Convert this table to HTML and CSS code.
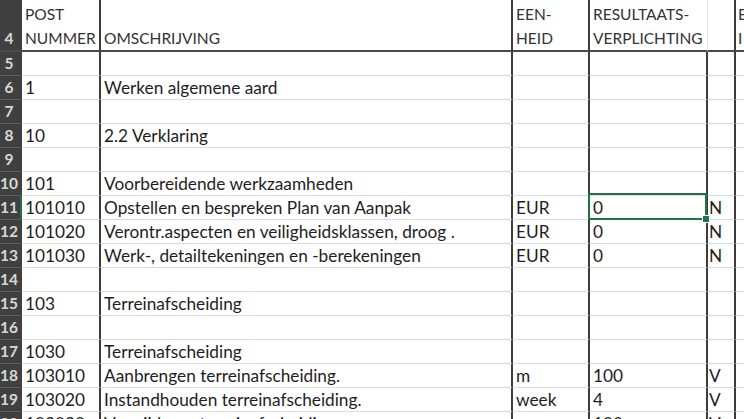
FILE: index.html
```html
<!DOCTYPE html>
<html lang="nl">
<head>
<meta charset="utf-8">
<title>Bestek</title>
<link rel="stylesheet" href="styles.css">
</head>
<body>
<table class="sheet">
  <colgroup>
    <col class="c-rh"><col class="c-a"><col class="c-b"><col class="c-c"><col class="c-d"><col class="c-e"><col class="c-f">
  </colgroup>
  <tr class="hdr">
    <th class="rh">4</th>
    <td class="a">POST<br>NUMMER</td>
    <td class="b">OMSCHRIJVING</td>
    <td class="c">EEN-<br>HEID</td>
    <td class="d">RESULTAATS-<br>VERPLICHTING</td>
    <td class="e"></td>
    <td class="f">E<br>I</td>
  </tr>
  <tr><th class="rh">5</th><td class="a"></td><td class="b"></td><td class="c"></td><td class="d"></td><td class="e"></td><td class="f"></td></tr>
  <tr><th class="rh">6</th><td class="a">1</td><td class="b">Werken algemene aard</td><td class="c"></td><td class="d"></td><td class="e"></td><td class="f"></td></tr>
  <tr><th class="rh">7</th><td class="a"></td><td class="b"></td><td class="c"></td><td class="d"></td><td class="e"></td><td class="f"></td></tr>
  <tr><th class="rh">8</th><td class="a">10</td><td class="b">2.2 Verklaring</td><td class="c"></td><td class="d"></td><td class="e"></td><td class="f"></td></tr>
  <tr><th class="rh">9</th><td class="a"></td><td class="b"></td><td class="c"></td><td class="d"></td><td class="e"></td><td class="f"></td></tr>
  <tr><th class="rh">10</th><td class="a">101</td><td class="b">Voorbereidende werkzaamheden</td><td class="c"></td><td class="d"></td><td class="e"></td><td class="f"></td></tr>
  <tr><th class="rh rh-active">11</th><td class="a">101010</td><td class="b">Opstellen en bespreken Plan van Aanpak</td><td class="c">EUR</td><td class="d selected">0</td><td class="e">N</td><td class="f"></td></tr>
  <tr><th class="rh">12</th><td class="a">101020</td><td class="b">Verontr.aspecten en veiligheidsklassen, droog .</td><td class="c">EUR</td><td class="d">0</td><td class="e">N</td><td class="f"></td></tr>
  <tr><th class="rh">13</th><td class="a">101030</td><td class="b">Werk-, detailtekeningen en -berekeningen</td><td class="c">EUR</td><td class="d">0</td><td class="e">N</td><td class="f"></td></tr>
  <tr><th class="rh">14</th><td class="a"></td><td class="b"></td><td class="c"></td><td class="d"></td><td class="e"></td><td class="f"></td></tr>
  <tr><th class="rh">15</th><td class="a">103</td><td class="b">Terreinafscheiding</td><td class="c"></td><td class="d"></td><td class="e"></td><td class="f"></td></tr>
  <tr><th class="rh">16</th><td class="a"></td><td class="b"></td><td class="c"></td><td class="d"></td><td class="e"></td><td class="f"></td></tr>
  <tr><th class="rh">17</th><td class="a">1030</td><td class="b">Terreinafscheiding</td><td class="c"></td><td class="d"></td><td class="e"></td><td class="f"></td></tr>
  <tr><th class="rh">18</th><td class="a">103010</td><td class="b">Aanbrengen terreinafscheiding.</td><td class="c">m</td><td class="d">100</td><td class="e">V</td><td class="f"></td></tr>
  <tr><th class="rh">19</th><td class="a">103020</td><td class="b">Instandhouden terreinafscheiding.</td><td class="c">week</td><td class="d">4</td><td class="e">V</td><td class="f"></td></tr>
  <tr><th class="rh">20</th><td class="a">103030</td><td class="b">Verwijderen terreinafscheiding.</td><td class="c">m</td><td class="d">100</td><td class="e">V</td><td class="f"></td></tr>
</table>
</body>
</html>
```
FILE: styles.css
```css
html, body {
  margin: 0;
  padding: 0;
  background: #ffffff;
  overflow: hidden;
  width: 744px;
  height: 419px;
}

.sheet {
  table-layout: fixed;
  border-collapse: separate;
  border-spacing: 0;
  width: 744px;
  font-family: "Lato", "Liberation Sans", sans-serif;
  font-size: 17.25px;
  color: #1e1e1e;
}

.c-rh { width: 22px; }
.c-a { width: 79px; }
.c-b { width: 412px; }
.c-c { width: 77px; }
.c-d { width: 118px; }
.c-e { width: 28px; }
.c-f { width: 8px; }

.sheet td,
.sheet th {
  padding: 0 0 0 3px;
  height: 23px;
  line-height: 23px;
  border-bottom: 1px solid #dcdcdc;
  white-space: nowrap;
  overflow: hidden;
  text-align: left;
  vertical-align: top;
  font-weight: normal;
}

.sheet .rh {
  padding: 0 4px 0 0;
  background: #404040;
  color: #d8d8d8;
  font-size: 15.5px;
  font-weight: bold;
  text-align: center;
  border-bottom: 1px solid #5c5c5c;
}

.sheet .rh-active {
  box-shadow: inset -2px 0 0 #217346;
}

.sheet .a,
.sheet .b,
.sheet .c,
.sheet .d,
.sheet .e {
  border-right: 2px solid #3c3c3c;
}

.sheet .e {
  padding-left: 1px;
}

.sheet .f {
  padding-left: 2px;
}

.hdr td,
.hdr th {
  height: 47px;
  padding-top: 3px;
  line-height: 23.5px;
  font-size: 15.5px;
  border-bottom: 2px solid #4a4a4a;
  color: #333333;
}

.sheet .hdr th.rh {
  vertical-align: bottom;
  padding-top: 0;
  height: 50px;
  line-height: 23px;
  color: #d8d8d8;
  border-bottom: 2px solid #4a4a4a;
}

.hdr .b {
  vertical-align: bottom;
}

.sheet .hdr .d {
  border-right: 1px solid #e4e4e4;
}

.sheet .hdr .e {
  border-right: 2px solid #3c3c3c;
}

.sheet .selected {
  position: relative;
  overflow: visible;
}

.selected::after {
  content: "";
  position: absolute;
  left: -2px;
  top: -3px;
  right: -1px;
  bottom: -1px;
  border: 2px solid #217346;
  pointer-events: none;
  z-index: 1;
}

.selected::before {
  content: "";
  position: absolute;
  right: -4px;
  bottom: -4px;
  width: 6px;
  height: 6px;
  background: #217346;
  border: 1px solid #ffffff;
  z-index: 2;
}
```
